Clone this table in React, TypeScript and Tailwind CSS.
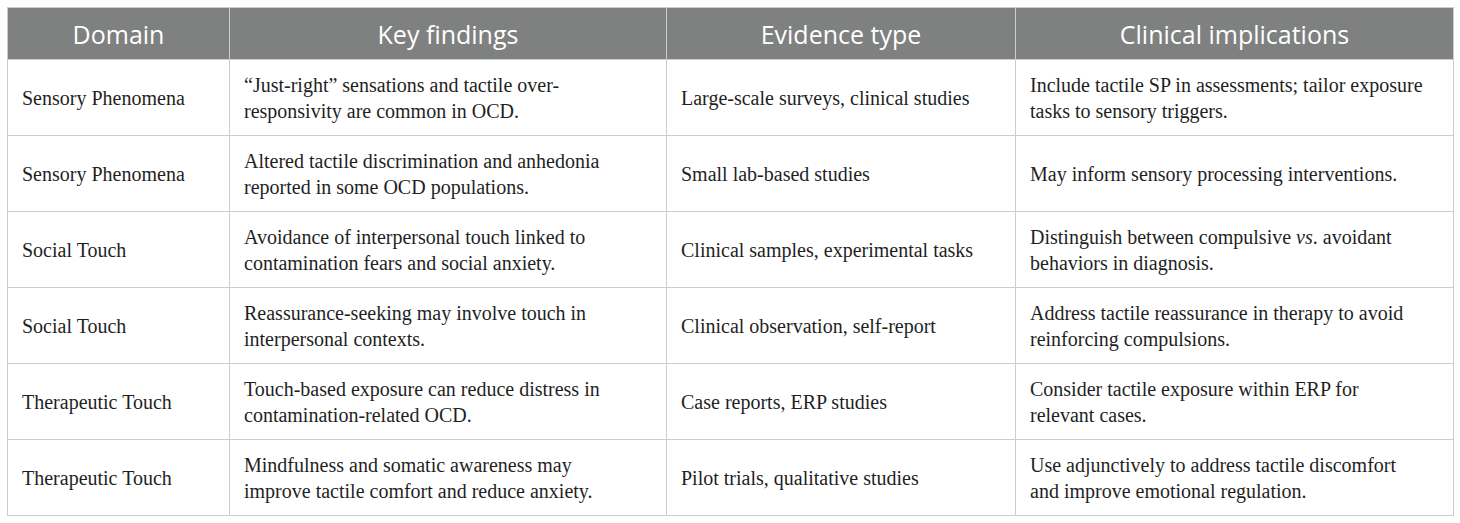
const rows: { domain: string; findings: React.ReactNode[]; evidence: string; implications: React.ReactNode[] }[] = [
  {
    domain: "Sensory Phenomena",
    findings: ["“Just-right” sensations and tactile over-", "responsivity are common in OCD."],
    evidence: "Large-scale surveys, clinical studies",
    implications: ["Include tactile SP in assessments; tailor exposure", "tasks to sensory triggers."],
  },
  {
    domain: "Sensory Phenomena",
    findings: ["Altered tactile discrimination and anhedonia", "reported in some OCD populations."],
    evidence: "Small lab-based studies",
    implications: ["May inform sensory processing interventions."],
  },
  {
    domain: "Social Touch",
    findings: ["Avoidance of interpersonal touch linked to", "contamination fears and social anxiety."],
    evidence: "Clinical samples, experimental tasks",
    implications: [
      <>
        Distinguish between compulsive <i>vs</i>. avoidant
      </>,
      "behaviors in diagnosis.",
    ],
  },
  {
    domain: "Social Touch",
    findings: ["Reassurance-seeking may involve touch in", "interpersonal contexts."],
    evidence: "Clinical observation, self-report",
    implications: ["Address tactile reassurance in therapy to avoid", "reinforcing compulsions."],
  },
  {
    domain: "Therapeutic Touch",
    findings: ["Touch-based exposure can reduce distress in", "contamination-related OCD."],
    evidence: "Case reports, ERP studies",
    implications: ["Consider tactile exposure within ERP for", "relevant cases."],
  },
  {
    domain: "Therapeutic Touch",
    findings: ["Mindfulness and somatic awareness may", "improve tactile comfort and reduce anxiety."],
    evidence: "Pilot trials, qualitative studies",
    implications: ["Use adjunctively to address tactile discomfort", "and improve emotional regulation."],
  },
]

function Lines({ lines }: { lines: React.ReactNode[] }) {
  return (
    <>
      {lines.map((l, i) => (
        <span key={i} className="block whitespace-nowrap">
          {l}
        </span>
      ))}
    </>
  )
}

export default function App() {
  const cell = "border border-[#cdcdcd] pl-[14px] pr-2 align-middle text-left"
  const head = "border border-[#cdcdcd] text-center font-normal"

  return (
    <div className="w-[1460px] h-[523px] bg-white pt-[7px] pl-[7px]">
      <table className="table-fixed border-collapse w-[1446px] font-['Liberation_Serif',serif] text-[20px] leading-[26px] text-[#1f1f1f]">
        <colgroup>
          <col className="w-[222px]" />
          <col className="w-[437px]" />
          <col className="w-[349px]" />
          <col className="w-[438px]" />
        </colgroup>
        <thead>
          <tr className="h-[52px] bg-[#7f8080] text-white font-['Open_Sans',sans-serif] text-[25px] leading-[30px]">
            <th className={head}>Domain</th>
            <th className={head}>Key findings</th>
            <th className={head}>Evidence type</th>
            <th className={head}>Clinical implications</th>
          </tr>
        </thead>
        <tbody>
          {rows.map((r, i) => (
            <tr key={i} className="h-[76px]">
              <td className={cell}>{r.domain}</td>
              <td className={cell}>
                <Lines lines={r.findings} />
              </td>
              <td className={cell}>{r.evidence}</td>
              <td className={cell}>
                <Lines lines={r.implications} />
              </td>
            </tr>
          ))}
        </tbody>
      </table>
    </div>
  )
}
